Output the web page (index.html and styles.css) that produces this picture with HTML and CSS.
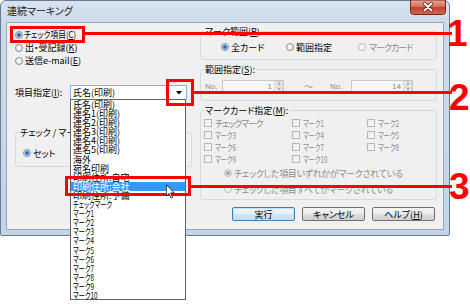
FILE: index.html
```html
<!DOCTYPE html>
<html lang="ja">
<head>
<meta charset="utf-8">
<title>連続マーキング</title>
<link rel="stylesheet" href="styles.css">
</head>
<body>
<div class="window">
  <div class="titlebar">
    <span class="title">連続マーキング</span>
    <span class="close"><svg width="36" height="15" viewBox="0 0 36 15"><defs><linearGradient id="cg" x1="0" y1="0" x2="0" y2="1"><stop offset="0" stop-color="#eaa99a"/><stop offset="0.45" stop-color="#d5705d"/><stop offset="0.5" stop-color="#c2412b"/><stop offset="1" stop-color="#d9674f"/></linearGradient></defs><path d="M0.5 0 V11.5 Q0.5 14.5 3.5 14.5 H32.5 Q35.5 14.5 35.5 11.5 V0 Z" fill="url(#cg)" stroke="#6d2a20"/><path d="M14.5 3.5 L21.5 10.5 M21.5 3.5 L14.5 10.5" stroke="#5a1d14" stroke-width="3.2" stroke-linecap="round"/><path d="M14.5 3.5 L21.5 10.5 M21.5 3.5 L14.5 10.5" stroke="#ffffff" stroke-width="1.8" stroke-linecap="round"/></svg></span>
  </div>
  <div class="client">
    <div class="left">
      <div class="radio-list">
        <div class="opt first"><span class="rb on"></span><span class="squeeze">チェック項目(<u>C</u>)</span></div>
        <div class="opt"><span class="rb"></span>出・受記録(<u>K</u>)</div>
        <div class="opt"><span class="rb"></span>送信e-mail(<u>E</u>)</div>
      </div>
      <div class="field">
        <span class="field-label">項目指定(<u>I</u>):</span>
        <div class="combo"><span class="combo-text">氏名(印刷)</span><span class="combo-btn"><svg width="6" height="4" viewBox="0 0 6 4"><path d="M0 0 H6 L3 3.5 Z" fill="#000"/></svg></span></div>
      </div>
      <fieldset class="group group-set">
        <legend>チェック / マーク</legend>
        <div class="opt set-opt"><span class="rb on"></span>セット</div>
      </fieldset>
    </div>
    <div class="right">
      <fieldset class="group g-range">
        <legend>マーク範囲(<u>P</u>)</legend>
        <div class="range-opts">
          <div class="opt"><span class="rb on"></span>全カード</div>
          <div class="opt"><span class="rb"></span>範囲指定</div>
          <div class="opt off tight2"><span class="rb"></span>マークカード</div>
        </div>
      </fieldset>
      <fieldset class="group g-nums">
        <legend>範囲指定(<u>S</u>):</legend>
        <div class="nums">
          <span class="no">No.</span>
          <span class="spin"><span class="val">1</span><span class="spin-btns"><span class="sb"><svg width="5" height="3" viewBox="0 0 5 3"><path d="M0 3 L2.5 0 L5 3 Z" fill="#a8a8a8"/></svg></span><span class="sb"><svg width="5" height="3" viewBox="0 0 5 3"><path d="M0 0 L2.5 3 L5 0 Z" fill="#a8a8a8"/></svg></span></span></span>
          <span class="tilde">～</span>
          <span class="no no2">No.</span>
          <span class="spin"><span class="val">14</span><span class="spin-btns"><span class="sb"><svg width="5" height="3" viewBox="0 0 5 3"><path d="M0 3 L2.5 0 L5 3 Z" fill="#a8a8a8"/></svg></span><span class="sb"><svg width="5" height="3" viewBox="0 0 5 3"><path d="M0 0 L2.5 3 L5 0 Z" fill="#a8a8a8"/></svg></span></span></span>
        </div>
      </fieldset>
      <fieldset class="group g-cards">
        <legend>マークカード指定(<u>M</u>):</legend>
        <div class="checks">
          <div class="chk tight3"><span class="cb"></span>チェックマーク</div>
          <div class="chk"><span class="cb"></span><span class="nk">マーク1</span></div>
          <div class="chk"><span class="cb"></span><span class="nk">マーク2</span></div>
          <div class="chk"><span class="cb"></span><span class="nk">マーク3</span></div>
          <div class="chk"><span class="cb"></span><span class="nk">マーク4</span></div>
          <div class="chk"><span class="cb"></span><span class="nk">マーク5</span></div>
          <div class="chk"><span class="cb"></span><span class="nk">マーク6</span></div>
          <div class="chk"><span class="cb"></span><span class="nk">マーク7</span></div>
          <div class="chk"><span class="cb"></span><span class="nk">マーク8</span></div>
          <div class="chk"><span class="cb"></span><span class="nk">マーク9</span></div>
          <div class="chk"><span class="cb"></span><span class="nk">マーク10</span></div>
        </div>
        <div class="opt off cond"><span class="rb on"></span>チェックした項目いずれかがマークされている</div>
        <div class="opt off cond"><span class="rb"></span>チェックした項目すべてがマークされている</div>
      </fieldset>
      <div class="buttons">
        <div class="btn default">実行</div>
        <div class="btn">キャンセル</div>
        <div class="btn">ヘルプ(<u>H</u>)</div>
      </div>
    </div>
  </div>
</div>

<ul class="dropdown">
  <li>氏名(印刷)</li>
  <li>連名1(印刷)</li>
  <li>連名2(印刷)</li>
  <li>連名3(印刷)</li>
  <li>連名4(印刷)</li>
  <li>連名5(印刷)</li>
  <li>海外</li>
  <li>宛名印刷</li>
  <li>印刷住所:自宅</li>
  <li class="sel">印刷住所:会社</li>
  <li>印刷住所:予備</li>
  <li><span class="nk">チェックマーク</span></li>
  <li><span class="nk">マーク1</span></li>
  <li><span class="nk">マーク2</span></li>
  <li><span class="nk">マーク3</span></li>
  <li><span class="nk">マーク4</span></li>
  <li><span class="nk">マーク5</span></li>
  <li><span class="nk">マーク6</span></li>
  <li><span class="nk">マーク7</span></li>
  <li><span class="nk">マーク8</span></li>
  <li><span class="nk">マーク9</span></li>
  <li><span class="nk">マーク10</span></li>
</ul>

<div class="note-box box1"></div>
<div class="note-line line1"></div>
<div class="note-num num1">1</div>
<div class="note-box box2"></div>
<div class="note-line line2"></div>
<div class="note-num num2">2</div>
<div class="note-box box3"></div>
<div class="note-line line3"></div>
<div class="note-num num3">3</div>

<svg class="cursor" width="9" height="15" viewBox="0 0 12 19"><path d="M0.5 0.5 V15.5 L4 12.2 L6.6 18.3 L8.8 17.3 L6.3 11.4 H11 Z" fill="#fff" stroke="#000" stroke-width="1"/></svg>
</body>
</html>
```

FILE: styles.css
```css
* { box-sizing: border-box; margin: 0; padding: 0; }
html, body { width: 470px; height: 304px; background: #fff; overflow: hidden; }
body {
  position: relative;
  font-family: "Noto Sans CJK JP", "Noto Sans", sans-serif;
  font-size: 9px;
  line-height: 1;
  font-feature-settings: "palt";
  color: #000;
}
u { text-decoration: underline; text-underline-offset: 1px; }

.window {
  width: 450px;
  height: 236px;
  border: 1px solid #6a7b92;
  border-radius: 6px 6px 2px 2px;
  background: linear-gradient(180deg, #d8e3f0 0, #cddaea 21px, #c3d4e8 100%);
  padding: 0 5px 5px;
  display: flex;
  flex-direction: column;
}
.titlebar { height: 21px; display: flex; align-items: flex-start; }
.title { font-size: 10px; margin: 5px 0 0 1px; color: #1b1b1b; }
.close { margin: -1px -2px 0 auto; width: 36px; height: 15px; display: block; }
.close svg { display: block; }

.client {
  flex: 1;
  border: 1px solid #98a8bc;
  background: #f0f0f0;
  display: grid;
  grid-template-columns: 193px 1fr;
}

/* shared controls */
.opt { display: flex; align-items: center; height: 13px; white-space: nowrap; }
.squeeze { display: inline-block; transform: scaleX(0.86); transform-origin: 0 50%; white-space: nowrap; }
.tight2 { letter-spacing: -1px; }
.tight3 { letter-spacing: -1.2px; }
.nk { display: inline-block; transform: scaleX(0.7); transform-origin: 0 50%; white-space: nowrap; }
.rb {
  width: 8px; height: 8px; flex: none; margin-right: 2px;
  border-radius: 50%;
  border: 1px solid #8a8c8e;
  background: radial-gradient(circle at 45% 40%, #ffffff 0, #e4e4e4 80%);
}
.rb.on {
  background: radial-gradient(circle at 50% 50%, #1d4f99 0, #2f7fd6 1.4px, #8cc1ef 2.4px, #e9eef3 2.9px, #f6f6f6 100%);
}
.first .rb { margin-right: 1px; }
.tight2 .rb, .tight3 .cb { margin-right: 3px; }
.off { color: #8c8c8c; }
.off .rb { border-color: #bcbec0; background: #f4f4f4; }
.off .rb.on { background: radial-gradient(circle at 50% 50%, #a6a6a6 0, #b4b4b4 2px, #f4f4f4 2.7px); }

.group {
  border: 1px solid #d3dbe2;
  border-radius: 3px;
  padding: 0;
  min-width: 0;
}
.group legend {
  margin-left: 3px;
  padding: 0 1px;
  height: 9px;
  line-height: 9px;
  white-space: nowrap;
}

/* left column */
.left { padding: 5px 0 0 8px; }
.field { margin-top: 18px; display: flex; align-items: center; height: 15px; }
.field-label { width: 55px; white-space: nowrap; }
.combo {
  width: 117px; height: 15px;
  border: 1px solid #7eb4ea;
  background: #fff;
  display: flex; align-items: center;
  padding-left: 2px;
}
.combo-text { white-space: nowrap; }
.combo-btn { margin-left: auto; width: 14px; height: 13px; display: flex; align-items: center; justify-content: center; }
.combo-btn svg { display: block; }
.group-set { margin-top: 27.5px; width: 177px; height: 39.5px; }
.set-opt { margin: 10px 0 0 7px; }

/* right column */
.right { padding: 3.5px 6px 0 0; display: flex; flex-direction: column; }
.g-range { height: 33.5px; }
.range-opts {
  display: grid;
  grid-template-columns: 65px 72px auto;
  padding: 5px 0 0 20px;
}
.g-nums { margin-top: 4.5px; height: 36.5px; }
.nums { display: flex; align-items: center; height: 13px; margin-top: 6.5px; color: #8c8c8c; }
.no { width: 21px; padding-left: 4px; font-size: 8px; font-family: "Liberation Sans", sans-serif; }
.no2 { width: 22px; padding-left: 1px; }
.spin {
  width: 62px; height: 13px;
  border: 1px solid #c2c9d1;
  background: #f7f7f7;
  display: flex; align-items: center; justify-content: flex-end;
}
.val { font-family: "Liberation Sans", sans-serif; font-size: 8px; margin-right: 2px; color: #8c8c8c; }
.spin-btns { width: 9px; height: 11px; display: flex; flex-direction: column; gap: 1px; }
.sb {
  flex: 1; border: 1px solid #d0d0d0; border-radius: 1px; background: #f0f0f0;
  display: flex; align-items: center; justify-content: center;
}
.sb svg { display: block; width: 4px; height: 2.5px; }
.tilde { width: 45px; padding-left: 20px; color: #9a9a9a; }

.g-cards { margin-top: 4.5px; height: 94.5px; }
.checks {
  display: grid;
  grid-template-columns: 88px 75px auto;
  grid-auto-rows: 12px;
  padding: 2.5px 0 0 3px;
  color: #8c8c8c;
}
.chk { display: flex; align-items: center; white-space: nowrap; }
.cb {
  width: 8px; height: 8px; flex: none; margin-right: 3px;
  border: 1px solid #b4b8bb;
  background: linear-gradient(135deg, #ebebeb, #fbfbfb);
}
.cond { height: 16px; margin-left: 23px; letter-spacing: -0.3px; }

.buttons { margin-top: 7px; display: flex; justify-content: flex-end; gap: 7px; padding-right: 2px; }
.btn {
  width: 63px; height: 14px;
  border: 1px solid #707070;
  border-radius: 2px;
  background: linear-gradient(180deg, #f4f4f4 0, #ebebeb 50%, #dddddd 51%, #d0d0d0 100%);
  display: flex; align-items: center; justify-content: center;
  white-space: nowrap;
}
.btn.default {
  border-color: #3c7fb1;
  box-shadow: inset 0 0 0 1px #bfe3f8;
  background: linear-gradient(180deg, #eef6fb 0, #e2eff8 50%, #d2e6f4 51%, #c4def1 100%);
}

/* dropdown list overlaying the dialog */
.dropdown {
  position: absolute;
  left: 70px; top: 99px;
  width: 116px; height: 201px;
  border: 1px solid #646464;
  background: #fff;
  list-style: none;
}
.dropdown li { height: 9.1px; line-height: 9.1px; padding-left: 2px; white-space: nowrap; }
.dropdown li.sel { background: #3399ff; color: #fff; }

/* red annotations */
.note-box { position: absolute; border: 3px solid #ff0000; }
.note-line { position: absolute; height: 3px; background: #ff0000; }
.note-num {
  position: absolute;
  font-family: "Liberation Sans", sans-serif;
  font-weight: bold;
  font-size: 37px;
  line-height: 37px;
  color: #ff0000;
}
.box1 { left: 10px; top: 26px; width: 75px; height: 17px; }
.line1 { left: 85px; top: 32px; width: 367px; }
.num1 { left: 447px; top: 15px; }
.box2 { left: 166px; top: 79px; width: 28px; height: 27px; }
.line2 { left: 194px; top: 91px; width: 258px; }
.num2 { left: 449px; top: 79px; }
.box3 { left: 65px; top: 176px; width: 126px; height: 20px; }
.line3 { left: 191px; top: 185px; width: 261px; }
.num3 { left: 449px; top: 168px; }

.cursor { position: absolute; left: 166px; top: 184px; }
```
